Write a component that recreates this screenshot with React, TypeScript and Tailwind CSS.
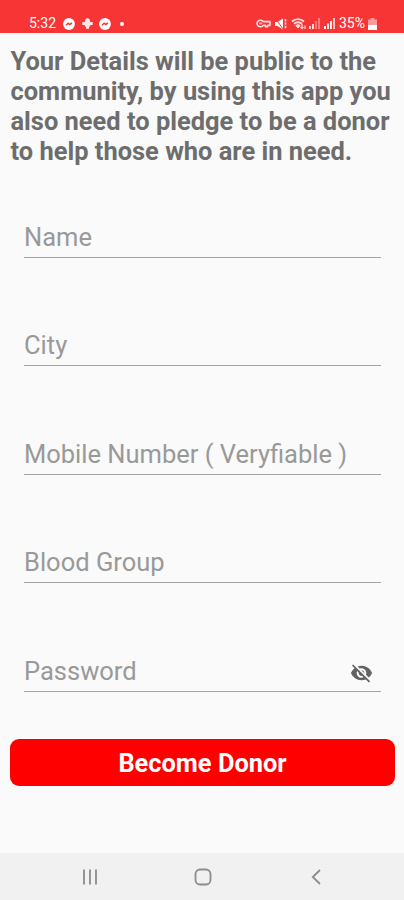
import React, { useState } from 'react';

interface FieldProps {
  label: string;
  type?: string;
  children?: React.ReactNode;
}

const MessengerIcon = () => (
  <svg width="12" height="12" viewBox="0 0 12 12">
    <circle cx="6" cy="6" r="5.9" fill="#fff" />
    <path d="M3 7.2 5.1 5.2l1.6 1.3L9 5" fill="none" stroke="#f83535" strokeWidth="1.5" />
  </svg>
);

const StatusBar = () => (
  <header className="flex h-[33px] shrink-0 items-end bg-[#f83535] pb-[2px] pl-[29px] pr-[27px] text-white">
    <span className="w-[28px] whitespace-nowrap text-[14px] leading-[15px]">5:32</span>
    <div className="ml-[6px] flex h-[15px] items-center">
      <MessengerIcon />
      <svg className="ml-[7px]" width="11" height="11" viewBox="0 0 11 11" fill="#ffe5e5">
        <path d="M3 3.4C3 1 4 .3 5.5.3S8 1 8 3.4zM2.8 3.6h5.4v5H2.8zM.3 4h2.8v3H.3zM7.9 4h2.8v3H7.9zM4 8h3v2.8H4z" />
      </svg>
      <span className="ml-[6px]">
        <MessengerIcon />
      </span>
      <span className="ml-[9px] size-[4px] rounded-full bg-white" />
    </div>

    <div className="ml-auto flex h-[15px] items-center">
      <svg width="15" height="9" viewBox="0 0 15 9" fill="none" stroke="#ffe0e0" strokeWidth="1.6">
        <path d="M7.2 2.6A3.4 3.2 0 1 0 7.2 6.4H9.4V7.6H11.8V6.4H14V2.6z" strokeLinejoin="round" />
        <path d="M3.2 4.5h3" />
      </svg>
      <svg className="ml-[4px]" width="12" height="12" viewBox="0 0 12 12">
        <path d="M0 4h2.5L8 .5v11L2.5 8H0z" fill="#fff" />
        <path d="M.5.5l8 11" stroke="#f83535" strokeWidth="1" />
        <path d="M10.5 1v10" stroke="#ffdada" strokeWidth="1.7" strokeDasharray="2.4 1" />
      </svg>
      <svg className="ml-[4px]" width="16" height="12" viewBox="0 0 16 12" fill="none" stroke="#ffdede">
        <path d="M1 3.5C4.5.3 9.5.3 13 3.5M3 5.8c2.5-2 5.5-2 8 0" strokeWidth="1.9" />
        <path d="M4.8 7.5c1.4-1 3-1 4.4 0L7 10z" fill="#ffdede" />
        <path d="M11 6v4.5M9.5 9l1.5 1.6L12.5 9M14 11V7.5" strokeWidth="1.2" />
      </svg>
      <svg className="ml-[2px]" width="12" height="11" viewBox="0 0 12 11" fill="#fff">
        <path d="M0 8h2v3H0zM3 6h2v5H3z" fillOpacity=".8" />
        <path d="M6 3h2v8H6zM9 0h2v11H9z" fillOpacity=".35" />
      </svg>
      <svg className="ml-[3px]" width="12" height="11" viewBox="0 0 12 11" fill="#fff">
        <path d="M0 8h2v3H0zM3 5.5h2v5.5H3zM6 3h2v8H6z" fillOpacity=".9" />
        <path d="M9 0h2v11H9z" fillOpacity=".75" />
      </svg>
      <span className="ml-[3px] w-[28px] whitespace-nowrap text-[14px] leading-[15px]">35%</span>
      <svg className="ml-[1px]" width="9" height="12" viewBox="0 0 9 12" fill="#fff">
        <path d="M2.5 0h4v1.5H9V7H0V1.5h2.5z" fillOpacity=".5" />
        <path d="M0 7h9v5H0z" />
      </svg>
    </div>
  </header>
);

const Field: React.FC<FieldProps> = ({ label, type = 'text', children }) => (
  <label className="flex h-[42px] items-start border-b border-[#a3a3a3]">
    <input
      type={type}
      placeholder={label}
      className="h-[42px] w-0 flex-1 bg-transparent text-[25.5px] text-gray-700 outline-none placeholder:text-[#999999]"
    />
    {children}
  </label>
);

const NavBar = () => (
  <nav className="flex h-[47px] shrink-0 items-center bg-[#f1f1f1] pl-[82px] text-[#8c8c8c]">
    <svg width="16" height="16" viewBox="0 0 16 16" stroke="currentColor" strokeWidth="1.8">
      <path d="M2 .5v15M8 .5v15M14 .5v15" />
    </svg>
    <svg className="ml-[96px]" width="18" height="18" viewBox="0 0 18 18" fill="none" stroke="currentColor" strokeWidth="1.8">
      <rect x="1.5" y="1.5" width="15" height="15" rx="4.5" />
    </svg>
    <svg className="ml-[99px]" width="11" height="16" viewBox="0 0 11 16" fill="none" stroke="currentColor" strokeWidth="1.8">
      <path d="M9 1 1.8 8 9 15" />
    </svg>
  </nav>
);

export default function App() {
  const [showPassword, setShowPassword] = useState(false);

  return (
    <div className="flex h-[900px] w-[404px] flex-col bg-[#fafafa] font-['Roboto',sans-serif]">
      <StatusBar />

      <main className="flex flex-1 flex-col px-[10px] pt-[13px]">
        <h1 className="whitespace-nowrap pl-[0.5px] text-[25.45px] font-bold leading-[30px] text-[#6d6d6d]">
          Your Details will be public to the
          <br />
          community, by using this app you
          <br />
          also need to pledge to be a donor
          <br />
          to help those who are in need.
        </h1>

        <form className="flex flex-col" onSubmit={(e) => e.preventDefault()}>
          <div className="ml-[14px] mr-[13px] mt-[50px] flex flex-col gap-[66.4px]">
            <Field label="Name" />
            <Field label="City" />
            <Field label="Mobile Number ( Veryfiable )" />
            <Field label="Blood Group" />
            <Field label="Password" type={showPassword ? 'text' : 'password'}>
              <button
                type="button"
                aria-label="Toggle password"
                className="mr-[8px] mt-[11px]"
                onClick={() => setShowPassword(!showPassword)}
              >
                <svg width="23" height="24" viewBox="0 0 24 24" fill="#626262">
                  <path d="M12 7c2.76 0 5 2.24 5 5 0 .65-.13 1.26-.36 1.83l2.92 2.92c1.51-1.26 2.7-2.89 3.43-4.75-1.73-4.39-6-7.5-11-7.5-1.4 0-2.74.25-3.98.7l2.16 2.16C10.74 7.13 11.35 7 12 7zM2 4.27l2.28 2.28.46.46C3.08 8.3 1.78 10.02 1 12c1.73 4.39 6 7.5 11 7.5 1.55 0 3.03-.3 4.38-.84l.42.42L19.73 22 21 20.73 3.27 3 2 4.27zM7.53 9.8l1.55 1.55c-.05.21-.08.43-.08.65 0 1.66 1.34 3 3 3 .22 0 .44-.03.65-.08l1.55 1.55c-.67.33-1.41.53-2.2.53-2.76 0-5-2.24-5-5 0-.79.2-1.53.53-2.2zm4.31-.78 3.15 3.15.02-.16c0-1.66-1.34-3-3-3l-.17.01z" />
                </svg>
              </button>
            </Field>
          </div>

          <button
            type="submit"
            className="mr-[-1px] mt-[47.4px] h-[47px] rounded-[9px] bg-[#ff0000] text-[25.4px] font-bold leading-[48px] text-white"
          >
            Become Donor
          </button>
        </form>
      </main>

      <NavBar />
    </div>
  );
}
